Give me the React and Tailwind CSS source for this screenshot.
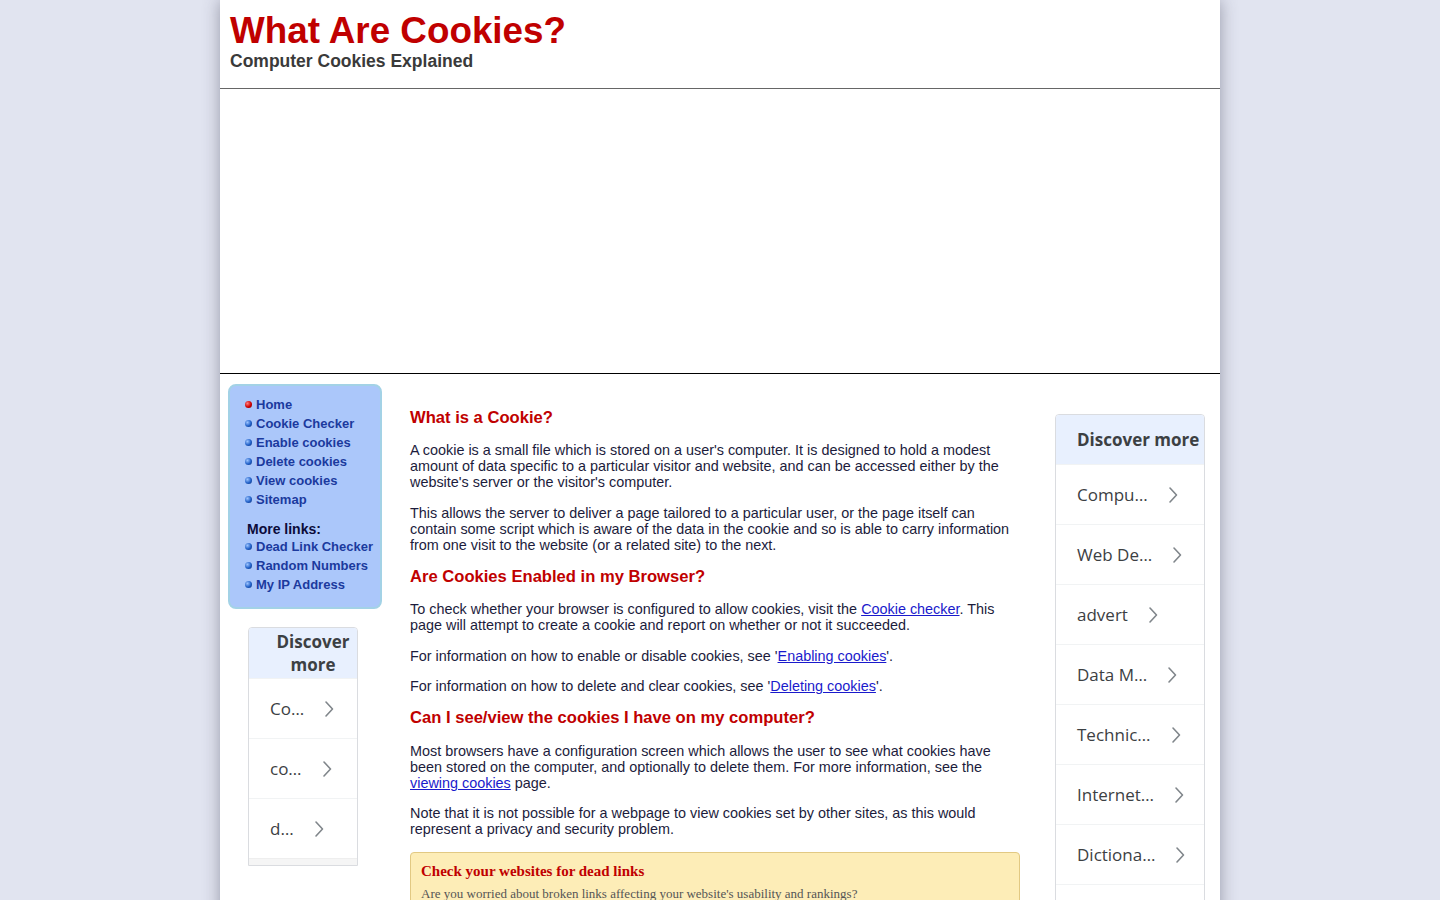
const navLinks = [
  { label: "Home", red: true },
  { label: "Cookie Checker" },
  { label: "Enable cookies" },
  { label: "Delete cookies" },
  { label: "View cookies" },
  { label: "Sitemap" },
];

const moreLinks = ["Dead Link Checker", "Random Numbers", "My IP Address"];

const rightTopics = ["Compu…", "Web De…", "advert", "Data M…", "Technic…", "Internet…", "Dictiona…", "Cookie…"];
const leftTopics = ["Co…", "co…", "d…"];

function Bullet({ red }) {
  return (
    <span
      className={
        red
          ? "mr-[4px] inline-block h-[7px] w-[7px] shrink-0 rounded-full bg-[radial-gradient(circle_at_35%_35%,#ff8080,#d00000_55%,#700000)]"
          : "mr-[4px] inline-block h-[7px] w-[7px] shrink-0 rounded-full bg-[radial-gradient(circle_at_35%_35%,#9cc4ff,#2060c8_55%,#0a2a70)]"
      }
    />
  );
}

function Chevron() {
  return (
    <svg width="10" height="18" viewBox="0 0 10 18" fill="none" className="shrink-0">
      <path d="M2 2l6.5 7L2 16" stroke="#80868b" strokeWidth="1.6" strokeLinecap="round" strokeLinejoin="round" />
    </svg>
  );
}

function Discover({ topics, narrow }) {
  return (
    <div className="overflow-hidden rounded-t-[4px] border border-[#dadce0] bg-white font-['Open_Sans',sans-serif]">
      <div
        className={
          narrow
            ? "flex h-[50px] flex-col items-center justify-center bg-[#e8f0fe] pl-[20px] text-[17px] font-bold leading-[23px] text-[#3c4043]"
            : "flex h-[49px] items-center whitespace-nowrap bg-[#e8f0fe] pl-[21px] text-[17px] font-bold text-[#3c4043]"
        }
      >
        {narrow ? (
          <>
            <span>Discover</span>
            <span>more</span>
          </>
        ) : (
          "Discover more"
        )}
      </div>
      {topics.map((t) => (
        <div key={t} className="flex h-[60px] items-center gap-[20px] border-t border-[#f1f3f4] pl-[21px] text-[17px] text-[#3c4043]">
          <span className="whitespace-nowrap">{t}</span>
          <Chevron />
        </div>
      ))}
      {narrow && <div className="h-[7px] border-t border-[#eeeeee] bg-[#f5f5f5]" />}
    </div>
  );
}

function A({ children }) {
  return <a className="text-[#1a1acc] underline">{children}</a>;
}

export default function App() {
  return (
    <div className="min-h-screen bg-[#e1e4f0] font-['Liberation_Sans',Arial,sans-serif]">
      <div className="mx-auto w-[1000px] bg-white shadow-[0_0_16px_rgba(60,60,80,0.45)]">
        <header className="border-b border-[#666666] px-[10px] pb-[16px] pt-[10px]">
          <h1 className="text-[36.8px] font-bold leading-[41px] text-[#c00000]">What Are Cookies?</h1>
          <p className="text-[17.5px] font-bold leading-[21px] text-[#3a3a3a]">Computer Cookies Explained</p>
        </header>
        <div className="h-[285px] border-b border-black" />
        <div className="flex items-start pb-[40px]">
          <aside className="ml-[8px] mt-[10px] w-[154px] shrink-0">
            <nav className="rounded-[8px] border-2 border-[#a3d2e6] bg-[#abc7fa] pb-[13px] pl-[15px] pt-[9px] text-[13px] font-bold leading-[19px] text-[#1b3a9e]">
              {navLinks.map((l) => (
                <div key={l.label} className="flex items-center">
                  <Bullet red={l.red} />
                  <span>{l.label}</span>
                </div>
              ))}
              <div className="ml-[2px] mt-[12px] text-[14px] leading-[16px] text-[#0c0c3a]">More links:</div>
              {moreLinks.map((l) => (
                <div key={l} className="flex items-center">
                  <Bullet />
                  <span>{l}</span>
                </div>
              ))}
            </nav>
            <div className="ml-[20px] mt-[18px] w-[110px]">
              <Discover topics={leftTopics} narrow />
            </div>
          </aside>
          <main className="ml-[28px] w-[610px] shrink-0 pt-[34px] text-[14.4px] leading-[16px] text-[#1c1c3c]">
            <h2 className="text-[16.6px] font-bold leading-[20px] text-[#c00000]">What is a Cookie?</h2>
            <p className="mt-[14px]">
              A cookie is a small file which is stored on a user's computer. It is designed to hold a modest amount of data specific to a particular visitor and website, and can be accessed either by the website's server or the visitor's computer.
            </p>
            <p className="mt-[15px]">
              This allows the server to deliver a page tailored to a particular user, or the page itself can contain some script which is aware of the data in the cookie and so is able to carry information from one visit to the website (or a related site) to the next.
            </p>
            <h2 className="mt-[14px] text-[16.6px] font-bold leading-[20px] text-[#c00000]">Are Cookies Enabled in my Browser?</h2>
            <p className="mt-[14px]">
              To check whether your browser is configured to allow cookies, visit the <A>Cookie checker</A>. This page will attempt to create a cookie and report on whether or not it succeeded.
            </p>
            <p className="mt-[15px]">
              For information on how to enable or disable cookies, see '<A>Enabling cookies</A>'.
            </p>
            <p className="mt-[14px]">
              For information on how to delete and clear cookies, see '<A>Deleting cookies</A>'.
            </p>
            <h2 className="mt-[14px] text-[16.6px] font-bold leading-[20px] text-[#c00000]">Can I see/view the cookies I have on my computer?</h2>
            <p className="mt-[15px]">
              Most browsers have a configuration screen which allows the user to see what cookies have been stored on the computer, and optionally to delete them. For more information, see the <A>viewing cookies</A> page.
            </p>
            <p className="mt-[14px]">
              Note that it is not possible for a webpage to view cookies set by other sites, as this would represent a privacy and security problem.
            </p>
            <div className="mt-[15px] rounded-[4px] border border-[#e2c983] bg-[#fdedb7] px-[10px] pb-[12px] pt-[9px] font-['Liberation_Serif','Times_New_Roman',serif]">
              <div className="text-[15px] font-bold leading-[18px] text-[#c00000]">Check your websites for dead links</div>
              <div className="mt-[6px] text-[13px] leading-[16px] text-[#555555]">
                Are you worried about broken links affecting your website's usability and rankings?
              </div>
              <div className="text-[13px] leading-[16px] text-[#555555]">
                Our free dead link checker scans your pages and reports any links that no longer work.
              </div>
            </div>
          </main>
          <aside className="ml-[35px] mt-[40px] w-[150px] shrink-0">
            <Discover topics={rightTopics} />
          </aside>
        </div>
      </div>
    </div>
  );
}
